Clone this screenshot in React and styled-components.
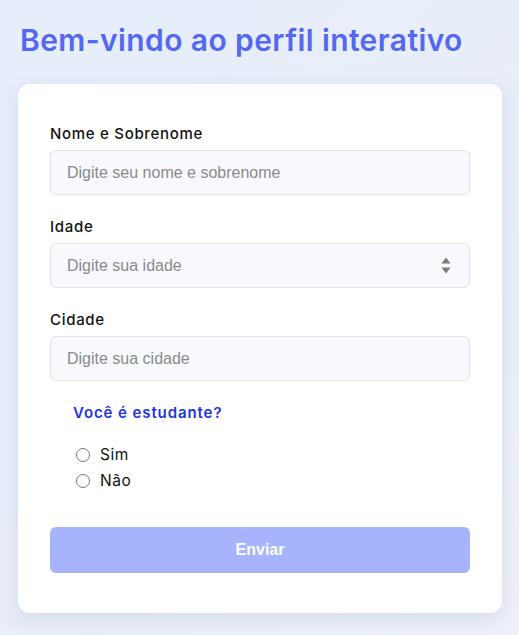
import React from "react";
import styled, { createGlobalStyle } from "styled-components";

const GlobalStyle = createGlobalStyle`
    html, body {
        margin: 0;
        padding: 0;
    }
    body {
        min-height: 635px;
        background: linear-gradient(135deg, #e6eefc 0%, #e9eef8 60%, #eef1fa 100%);
        font-family: "Inter", "Liberation Sans", sans-serif;
    }
`;

const Page = styled.div`
    padding: 20px 17px 22px 18px;
`;

const Title = styled.h1`
    margin: 0 0 24px 2px;
    font-size: 30px;
    line-height: 40px;
    font-weight: 600;
    color: #5468f2;
    letter-spacing: 0.4px;
`;

const Card = styled.form`
    display: flex;
    flex-direction: column;
    background: #ffffff;
    border-radius: 12px;
    padding: 41px 32px 40px;
    box-shadow: 0 6px 20px rgba(120, 135, 170, 0.18);
`;

const Field = styled.div`
    display: flex;
    flex-direction: column;
    gap: 7px;
    margin-bottom: 23px;
`;

const Label = styled.label`
    font-size: 15px;
    line-height: 18px;
    font-weight: 500;
    color: #111111;
    letter-spacing: 0.7px;
`;

const InputWrap = styled.div`
    position: relative;
`;

const Input = styled.input`
    box-sizing: border-box;
    width: 100%;
    height: 45px;
    padding: 0 16px;
    border: 1px solid #e0e3ec;
    border-radius: 6px;
    background: #f8f9fd;
    font-family: "Liberation Sans", Arial, sans-serif;
    font-size: 16px;
    color: #333;
    outline: none;

    &::placeholder {
        color: #8a8a8a;
    }
`;

const Spinner = styled.svg`
    position: absolute;
    right: 19px;
    top: 14px;
`;

const Group = styled.fieldset`
    border: none;
    margin: 0;
    padding: 0 0 0 23px;
    display: flex;
    flex-direction: column;
`;

const Question = styled.legend`
    padding: 0;
    margin: 0;
    font-size: 15px;
    line-height: 18px;
    font-weight: 600;
    color: #1d35dc;
    letter-spacing: 0.9px;
`;

const Options = styled.div`
    display: flex;
    flex-direction: column;
    gap: 8px;
    padding-top: 24px;
`;

const Option = styled.label`
    display: flex;
    align-items: center;
    gap: 10px;
    font-size: 15.5px;
    line-height: 18px;
    color: #111;
    letter-spacing: 0.5px;
`;

const Radio = styled.input`
    margin: 0 0 0 3px;
    width: 14px;
    height: 14px;
`;

const Button = styled.button`
    margin-top: 37px;
    height: 46px;
    border: none;
    border-radius: 6px;
    background: #a5b4fc;
    color: #ffffff;
    font-family: "Liberation Sans", Arial, sans-serif;
    font-size: 16px;
    font-weight: 700;
`;

export default function App() {
    return (
        <>
            <GlobalStyle />
            <Page>
                <Title>Bem-vindo ao perfil interativo</Title>
                <Card onSubmit={(e) => e.preventDefault()}>
                    <Field>
                        <Label htmlFor="nome">Nome e Sobrenome</Label>
                        <Input id="nome" type="text" placeholder="Digite seu nome e sobrenome" />
                    </Field>
                    <Field>
                        <Label htmlFor="idade">Idade</Label>
                        <InputWrap>
                            <Input id="idade" type="text" inputMode="numeric" placeholder="Digite sua idade" />
                            <Spinner width="10" height="17" viewBox="0 0 10 17">
                                <path d="M5 0.5 L9.5 6.5 L0.5 6.5 Z" fill="#7b7b7b" />
                                <path d="M0.5 10.5 L9.5 10.5 L5 16.5 Z" fill="#7b7b7b" />
                            </Spinner>
                        </InputWrap>
                    </Field>
                    <Field>
                        <Label htmlFor="cidade">Cidade</Label>
                        <Input id="cidade" type="text" placeholder="Digite sua cidade" />
                    </Field>
                    <Group>
                        <Question>Você é estudante?</Question>
                        <Options>
                            <Option>
                                <Radio type="radio" name="estudante" value="sim" />
                                Sim
                            </Option>
                            <Option>
                                <Radio type="radio" name="estudante" value="nao" />
                                Não
                            </Option>
                        </Options>
                    </Group>
                    <Button type="submit">Enviar</Button>
                </Card>
            </Page>
        </>
    );
}
